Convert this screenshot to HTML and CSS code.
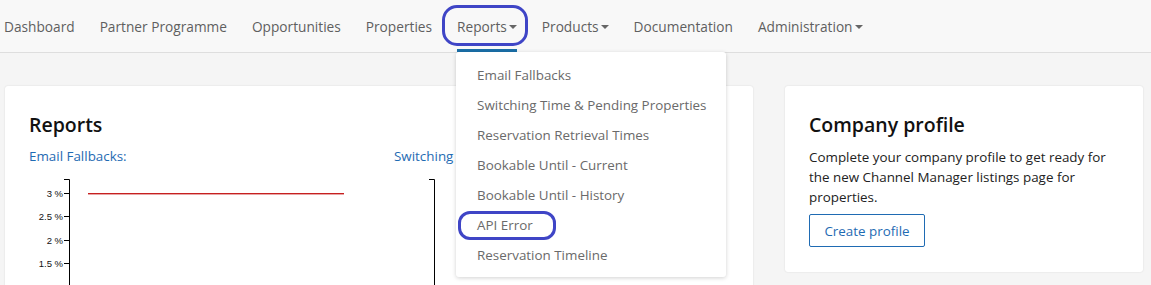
FILE: index.html
```html
<!DOCTYPE html>
<html>
<head>
<meta charset="utf-8">
<link rel="stylesheet" href="styles.css">
</head>
<body>
<nav class="navbar">
  <ul class="nav">
    <li class="nav-item"><a>Dashboard</a></li>
    <li class="nav-item"><a>Partner Programme</a></li>
    <li class="nav-item"><a>Opportunities</a></li>
    <li class="nav-item"><a>Properties</a></li>
    <li class="nav-item active"><a>Reports <span class="caret"></span></a>
      <span class="annot annot-reports"></span>
      <ul class="dropdown">
        <li>Email Fallbacks</li>
        <li>Switching Time &amp; Pending Properties</li>
        <li>Reservation Retrieval Times</li>
        <li>Bookable Until - Current</li>
        <li>Bookable Until - History</li>
        <li class="api">API Error<span class="annot annot-api"></span></li>
        <li>Reservation Timeline</li>
      </ul>
    </li>
    <li class="nav-item"><a>Products<span class="caret"></span></a></li>
    <li class="nav-item"><a>Documentation</a></li>
    <li class="nav-item"><a>Administration<span class="caret"></span></a></li>
  </ul>
</nav>
<main class="content">
  <section class="card reports-card">
    <h2>Reports</h2>
    <div class="charts">
      <div class="chart">
        <a class="chart-title">Email Fallbacks:</a>
        <svg class="chart-svg" width="330" height="110" viewBox="0 0 330 110">
          <g font-family="Liberation Sans, Arial, sans-serif" font-size="9.5" fill="#111" text-anchor="end">
            <text x="34" y="18">3 %</text>
            <text x="34" y="41">2.5 %</text>
            <text x="34" y="65">2 %</text>
            <text x="34" y="88">1.5 %</text>
          </g>
          <g stroke="#000" stroke-width="1">
            <path d="M35 0.5 H40.5 V110" fill="none"/>
            <path d="M35 14.5 H40"/>
            <path d="M35 37.5 H40"/>
            <path d="M35 61.5 H40"/>
            <path d="M35 84.5 H40"/>
          </g>
          <rect class="series" x="59" y="14" width="256" height="1.4"/>
        </svg>
      </div>
      <div class="chart">
        <a class="chart-title">Switching Time:</a>
        <svg class="chart-svg" width="330" height="110" viewBox="0 0 330 110">
          <path d="M35 0.5 H40.5 V110" fill="none" stroke="#000" stroke-width="1"/>
        </svg>
      </div>
    </div>
  </section>
  <section class="card profile-card">
    <h2>Company profile</h2>
    <p>Complete your company profile to get ready for the new Channel Manager listings page for properties.</p>
    <button class="btn-outline">Create profile</button>
  </section>
</main>
</body>
</html>
```

FILE: styles.css
```css
* { box-sizing: border-box; }
html, body { margin: 0; padding: 0; }
body {
  background: #f5f5f5;
  font-family: "Open Sans", "Noto Sans", sans-serif;
  font-size: 13.4px;
  color: #222;
  width: 1151px;
  height: 285px;
  overflow: hidden;
}
.navbar {
  background: #f8f8f8;
  border-bottom: 1px solid #dedede;
  height: 53px;
  position: relative;
  z-index: 5;
}
.nav {
  list-style: none;
  margin: 0;
  padding: 0 0 0 4px;
  display: flex;
  gap: 25px;
  height: 52px;
}
.nav-item {
  position: relative;
  display: flex;
  align-items: center;
  font-size: 13.7px;
  color: #5f5f5f;
}
.nav-item > a {
  display: flex;
  align-items: center;
  height: 52px;
  white-space: nowrap;
}
.nav-item.active > a {
  box-shadow: inset 0 -3px 0 #1a6fa8;
}
.caret {
  display: inline-block;
  width: 0;
  height: 0;
  margin-left: 2px;
  border-left: 4px solid transparent;
  border-right: 4px solid transparent;
  border-top: 4px solid #666;
  margin-top: 2px;
}
.annot {
  position: absolute;
  border: 3px solid #3f45c6;
  pointer-events: none;
}
.annot-reports {
  left: -15px;
  top: 5px;
  width: 86px;
  height: 41px;
  border-radius: 15px;
}
.dropdown {
  position: absolute;
  left: -1px;
  top: 52px;
  width: 270px;
  margin: 0;
  padding: 8px 0 7px;
  list-style: none;
  background: #fff;
  border-radius: 3px;
  box-shadow: 0 1px 4px rgba(0,0,0,0.18);
}
.dropdown li {
  position: relative;
  height: 30px;
  line-height: 30px;
  padding-left: 21px;
  color: #6a6a6a;
  font-size: 13.4px;
  white-space: nowrap;
}
.annot-api {
  left: 2px;
  top: 1px;
  width: 98px;
  height: 29px;
  border-radius: 12px;
}
.content {
  display: flex;
  gap: 32px;
  padding: 33px 0 0 5px;
  align-items: flex-start;
}
.card {
  background: #fff;
  border-radius: 3px;
  box-shadow: 0 0 2px rgba(0,0,0,0.12);
}
.card h2 {
  margin: 0;
  font-size: 19.5px;
  font-weight: 600;
  line-height: 28px;
  color: #111;
}
.reports-card {
  flex: none;
  width: 748px;
  height: 240px;
  padding: 25px 24px 0;
  overflow: hidden;
}
.charts {
  display: flex;
  margin-top: 7px;
}
.chart {
  flex: none;
  width: 365px;
  display: flex;
  flex-direction: column;
}
.series {
  fill: #c62020;
}
.chart-title {
  color: #1f6bb3;
  font-size: 13.4px;
  line-height: 20px;
  white-space: nowrap;
}
.chart-svg {
  display: block;
  margin-top: 13px;
}
.profile-card {
  flex: none;
  width: 358px;
  height: 186px;
  padding: 25px 24px;
}
.profile-card p {
  margin: 8px 0 7px;
  line-height: 20px;
  font-size: 13.4px;
  color: #222;
}
.btn-outline {
  font-family: inherit;
  font-size: 13.4px;
  color: #1f6bb3;
  background: #fff;
  border: 1px solid #1f6bb3;
  border-radius: 2px;
  width: 116px;
  height: 33px;
  padding: 0;
}
```
